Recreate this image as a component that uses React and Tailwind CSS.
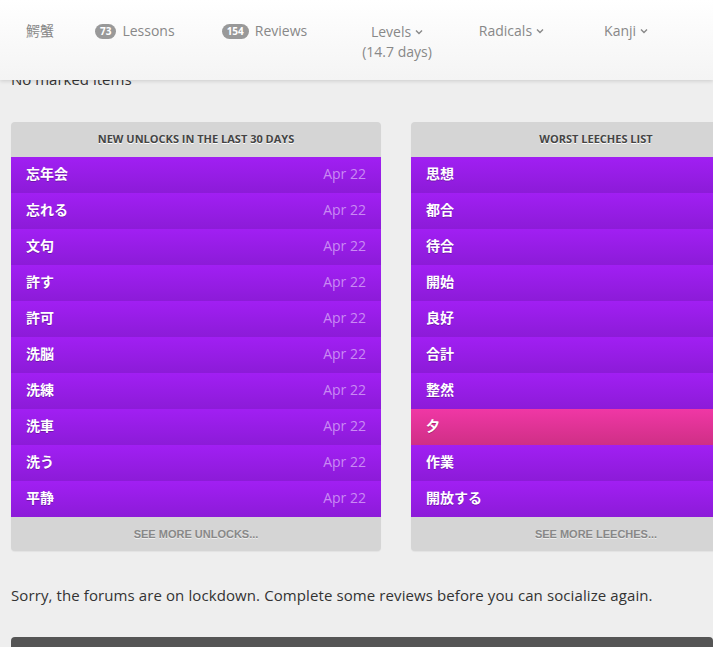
const unlocks = ['忘年会', '忘れる', '文句', '許す', '許可', '洗脳', '洗練', '洗車', '洗う', '平静']
const leeches = [
  { text: '思想' },
  { text: '都合' },
  { text: '待合' },
  { text: '開始' },
  { text: '良好' },
  { text: '合計' },
  { text: '整然' },
  { text: '夕', radical: true },
  { text: '作業' },
  { text: '開放する' },
]

const jp = { fontFamily: '"Open Sans", "Noto Sans CJK JP", sans-serif' }

function Chevron() {
  return (
    <svg width="8" height="6" viewBox="0 0 8 6" className="ml-1 inline-block">
      <path d="M1 1.5 L4 4.5 L7 1.5" fill="none" stroke="currentColor" strokeWidth="1.4" />
    </svg>
  )
}

function Badge({ children }) {
  return (
    <span className="inline-flex items-center justify-center h-[15px] px-[5px] rounded-full bg-[#999] text-white text-[10px] font-bold leading-none mr-[6px]">
      {children}
    </span>
  )
}

function Panel({ title, footer, children }) {
  return (
    <div className="w-[370px] shrink-0 rounded-[4px] bg-[#d5d5d5] overflow-hidden shadow-[0_1px_1px_rgba(0,0,0,0.05)]">
      <div
        className="h-[35px] flex items-center justify-center text-[11px] font-bold text-[#444] [text-shadow:0_1px_0_#fff]"
        style={{ fontFamily: '"Open Sans", sans-serif' }}
      >
        {title}
      </div>
      <div>{children}</div>
      <div
        className="h-[34px] flex items-center justify-center text-[11px] font-bold text-[#888] [text-shadow:0_1px_0_#eee]"
        style={{ fontFamily: '"Liberation Sans", Arial, sans-serif' }}
      >
        {footer}
      </div>
    </div>
  )
}

function Row({ text, date, pink }) {
  return (
    <div
      className={`h-[36px] flex items-center justify-between px-[15px] text-[14px] ${
        pink
          ? 'bg-gradient-to-b from-[#f037a5] to-[#cf2f86]'
          : 'bg-gradient-to-b from-[#a11ff3] to-[#8c1bd8]'
      }`}
    >
      <span className="text-white font-bold leading-[20px] -mt-[2px] [text-shadow:0_1px_0_rgba(0,0,0,0.25)]" style={jp}>
        {text}
      </span>
      {date && <span className="text-[#c98af3] leading-[20px] -mt-[2px]">{date}</span>}
    </div>
  )
}

export default function App() {
  return (
    <div
      className="relative h-[647px] w-[713px] overflow-hidden bg-[#eeeeee] text-[#333]"
      style={{ fontFamily: '"Open Sans", "Noto Sans CJK JP", sans-serif' }}
    >
      <div className="absolute top-0 left-0 right-0 h-[80px] z-10 bg-gradient-to-b from-[#ffffff] to-[#f4f4f4] shadow-[0_1px_4px_rgba(0,0,0,0.15)]">
        <div className="flex items-start pt-[22px] text-[14px] text-[#888]">
          <span className="ml-[26px] leading-[18px]" style={jp}>鰐蟹</span>
          <span className="ml-[41px] flex items-center leading-[18px]">
            <Badge>73</Badge>Lessons
          </span>
          <span className="ml-[47px] flex items-center leading-[18px]">
            <Badge>154</Badge>Reviews
          </span>
          <span className="ml-[55px] flex flex-col items-center leading-[20px]">
            <span className="flex items-center">
              Levels<Chevron />
            </span>
            <span>(14.7 days)</span>
          </span>
          <span className="ml-[47px] flex items-center leading-[18px]">
            Radicals<Chevron />
          </span>
          <span className="ml-[60px] flex items-center leading-[18px]">
            Kanji<Chevron />
          </span>
        </div>
      </div>

      <div className="pt-[68px] px-[11px] text-[15px] leading-[22px]">No marked items</div>

      <div className="flex gap-[30px] pl-[11px] mt-[32px]">
        <Panel title="NEW UNLOCKS IN THE LAST 30 DAYS" footer="SEE MORE UNLOCKS...">
          {unlocks.map((u) => (
            <Row key={u} text={u} date="Apr 22" />
          ))}
        </Panel>
        <Panel title="WORST LEECHES LIST" footer="SEE MORE LEECHES...">
          {leeches.map((l) => (
            <Row key={l.text} text={l.text} pink={l.radical} />
          ))}
        </Panel>
      </div>

      <p className="mt-[33px] px-[11px] text-[15px] tracking-[0.1px] leading-[22px] text-[#333]">
        Sorry, the forums are on lockdown. Complete some reviews before you can socialize again.
      </p>

      <div className="absolute left-[11px] right-0 top-[637px] h-[20px] rounded-t-[4px] bg-[#555]" />
    </div>
  )
}
